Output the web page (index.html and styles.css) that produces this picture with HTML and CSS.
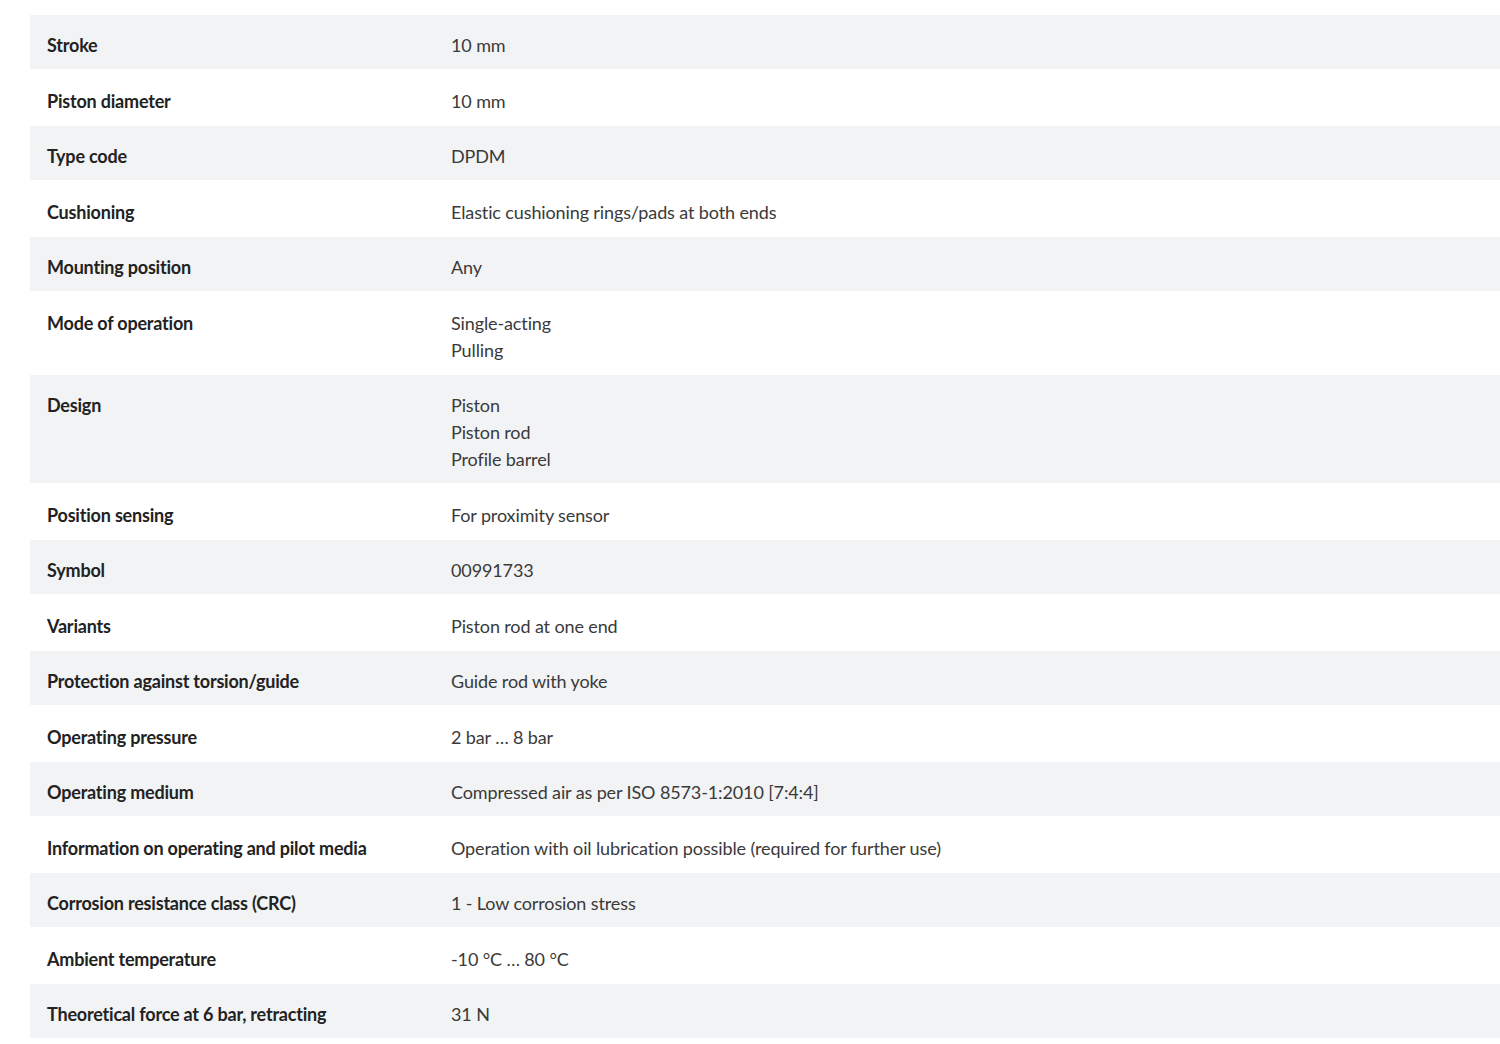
FILE: index.html
```html
<!DOCTYPE html>
<html lang="en">
<head>
<meta charset="utf-8">
<title>Technical data</title>
<link rel="stylesheet" href="styles.css">
</head>
<body>
<div class="specs">
  <div class="row"><div class="label">Stroke</div><div class="value">10 mm</div></div>
  <div class="row"><div class="label">Piston diameter</div><div class="value">10 mm</div></div>
  <div class="row"><div class="label">Type code</div><div class="value">DPDM</div></div>
  <div class="row"><div class="label">Cushioning</div><div class="value">Elastic cushioning rings/pads at both ends</div></div>
  <div class="row"><div class="label">Mounting position</div><div class="value">Any</div></div>
  <div class="row"><div class="label">Mode of operation</div><div class="value"><div>Single-acting</div><div>Pulling</div></div></div>
  <div class="row"><div class="label">Design</div><div class="value"><div>Piston</div><div>Piston rod</div><div>Profile barrel</div></div></div>
  <div class="row"><div class="label">Position sensing</div><div class="value">For proximity sensor</div></div>
  <div class="row"><div class="label">Symbol</div><div class="value">00991733</div></div>
  <div class="row"><div class="label">Variants</div><div class="value">Piston rod at one end</div></div>
  <div class="row"><div class="label">Protection against torsion/guide</div><div class="value">Guide rod with yoke</div></div>
  <div class="row"><div class="label">Operating pressure</div><div class="value">2 bar … 8 bar</div></div>
  <div class="row"><div class="label">Operating medium</div><div class="value">Compressed air as per ISO 8573-1:2010 [7:4:4]</div></div>
  <div class="row"><div class="label">Information on operating and pilot media</div><div class="value">Operation with oil lubrication possible (required for further use)</div></div>
  <div class="row"><div class="label">Corrosion resistance class (CRC)</div><div class="value">1 - Low corrosion stress</div></div>
  <div class="row"><div class="label">Ambient temperature</div><div class="value">-10 °C … 80 °C</div></div>
  <div class="row"><div class="label">Theoretical force at 6 bar, retracting</div><div class="value">31 N</div></div>
</div>
</body>
</html>
```
FILE: styles.css
```css
html, body {
  margin: 0;
  padding: 0;
  background: #ffffff;
}

body {
  font-family: "Lato", "Roboto", "Liberation Sans", sans-serif;
  font-size: 18px;
  line-height: 27px;
  color: #333333;
}

.specs {
  margin: 15px 0 0 30px;
  width: 1470px;
  display: flex;
  flex-direction: column;
}

.row {
  display: grid;
  grid-template-columns: 404px 1fr;
  padding: 19px 0 11px;
  background: #ffffff;
}

.row:nth-child(odd) {
  background: #f2f3f4;
  padding: 17px 0 10px;
}

.label {
  padding-left: 17px;
  font-weight: 700;
  color: #222222;
  letter-spacing: -0.2px;
}

.value {
  padding-left: 17px;
  color: #3a3a3a;
  letter-spacing: -0.12px;
}
```
